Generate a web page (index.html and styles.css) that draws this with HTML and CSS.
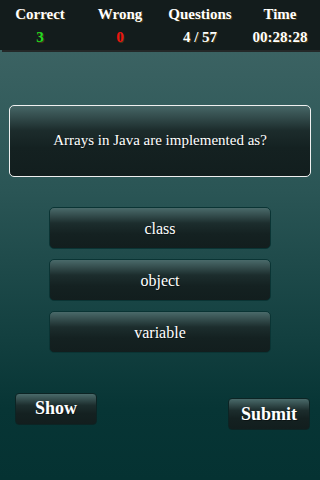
FILE: index.html
```html
<!DOCTYPE html>
<html>
<head>
<meta charset="utf-8">
<link rel="stylesheet" href="styles.css">
</head>
<body>
<div class="header">
  <div class="stat"><div class="label">Correct</div><div class="value green">3</div></div>
  <div class="stat"><div class="label">Wrong</div><div class="value red">0</div></div>
  <div class="stat"><div class="label">Questions</div><div class="value">4 / 57</div></div>
  <div class="stat"><div class="label">Time</div><div class="value">00:28:28</div></div>
</div>
<div class="question">Arrays in Java are implemented as?</div>
<div class="options">
  <div class="option">class</div>
  <div class="option">object</div>
  <div class="option">variable</div>
</div>
<div class="actions">
  <div class="btn show">Show</div>
  <div class="btn submit">Submit</div>
</div>
</body>
</html>
```
FILE: styles.css
```css
html, body {
  margin: 0;
  padding: 0;
}
body {
  width: 320px;
  height: 480px;
  overflow: hidden;
  font-family: "Liberation Serif", "Times New Roman", serif;
  color: #fff;
  background: linear-gradient(#416767 0%, #2a5555 40%, #073535 85%, #053232 100%);
}
.header {
  height: 50px;
  background: #131c1c;
  display: grid;
  grid-template-columns: repeat(4, 1fr);
  box-shadow: 2px 2px 0 #242828;
  font-weight: bold;
  font-size: 15px;
  text-shadow: 1px 1px 0 rgba(90, 70, 20, 0.7);
}
.stat {
  display: flex;
  flex-direction: column;
  align-items: center;
  padding-top: 5px;
}
.label {
  line-height: 18px;
}
.value {
  margin-top: 5px;
  line-height: 18px;
}
.green { color: #22dd22; }
.red { color: #ee1111; }
.question {
  margin: 55px 9px 0 9px;
  height: 68px;
  border: 1px solid #f0f0f0;
  border-radius: 5px;
  background: linear-gradient(#466666 0%, #1c2c2c 35%, #142121 60%, #121e1e 100%);
  display: flex;
  align-items: center;
  justify-content: center;
  font-size: 15px;
  padding-bottom: 2px;
  box-sizing: content-box;
  text-shadow: 1px 1px 0 rgba(0, 0, 0, 0.4);
}
.options {
  margin: 30px 49px 0 49px;
  display: flex;
  flex-direction: column;
  gap: 10px;
}
.option {
  height: 38px;
  padding-top: 2px;
  border: 1px solid #0a3434;
  border-radius: 5px;
  background: linear-gradient(#4a6a6a 0%, #1c2d2d 38%, #142121 65%, #121e1e 100%);
  display: flex;
  align-items: center;
  justify-content: center;
  font-size: 16px;
  text-shadow: 1px 1px 0 rgba(0, 0, 0, 0.4);
}
.actions {
  margin: 40px 10px 0 15px;
  display: flex;
  justify-content: space-between;
  align-items: flex-start;
}
.btn {
  width: 80px;
  height: 30px;
  border: 1px solid #0c2424;
  border-radius: 4px;
  background: linear-gradient(#4a6a6a 0%, #1c2d2d 38%, #142121 65%, #121e1e 100%);
  display: flex;
  align-items: center;
  justify-content: center;
  font-size: 18px;
  font-weight: bold;
  text-shadow: 1px 1px 0 rgba(0, 0, 0, 0.4);
}
.show {
  padding-bottom: 2px;
  height: 28px;
}
.submit {
  margin-top: 5px;
}
```
